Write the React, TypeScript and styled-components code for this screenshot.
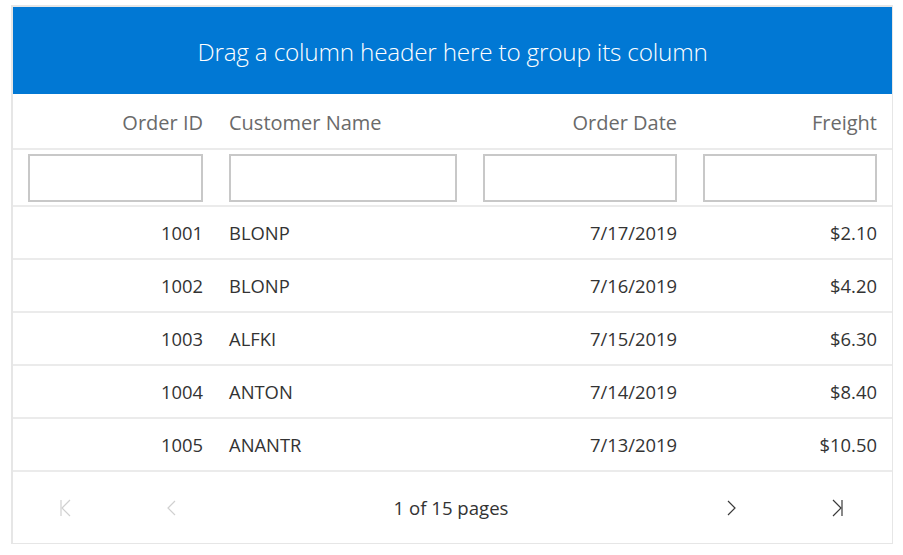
import React from "react";
import styled, { createGlobalStyle } from "styled-components";

const GlobalStyle = createGlobalStyle`
  html, body {
    margin: 0;
    padding: 0;
    background: #ffffff;
  }
  body {
    font-family: "Open Sans", "Noto Sans", "Liberation Sans", sans-serif;
  }
`

const Page = styled.div`
  padding: 5px 10px 10px 11px;
  width: 903px;
  box-sizing: border-box;
`

const Grid = styled.div`
  width: 882px;
  box-sizing: border-box;
  border-top: 2px solid #e6e6e6;
  border-left: 2px solid #e6e6e6;
  border-right: 1px solid #e6e6e6;
  border-bottom: 1px solid #e6e6e6;
  background: #fff;
`

const GroupPanel = styled.div`
  height: 87px;
  background: #0178d4;
  color: #ffffff;
  display: flex;
  align-items: center;
  justify-content: center;
  font-weight: 300;
  font-size: 24.3px;
  letter-spacing: -0.2px;
  padding-top: 2px;
  box-sizing: border-box;
`

const Row = styled.div<{ $height: number }>`
  display: grid;
  grid-template-columns: 203px 254px 220px 200px;
  height: ${p => p.$height}px;
  border-bottom: 2px solid #ebebeb;
  box-sizing: content-box;
`

const Cell = styled.div<{ $align?: "left" | "right"; $head?: boolean }>`
  display: flex;
  align-items: center;
  justify-content: ${p => (p.$align === "right" ? "flex-end" : "flex-start")};
  padding: ${p => (p.$head ? "3px" : "0")} 13px 0;
  font-size: ${p => (p.$head ? "20px" : "18.4px")};
  color: ${p => (p.$head ? "#6a6a6a" : "#333333")};
  white-space: nowrap;
  overflow: hidden;
`

const FilterCell = styled.div<{ $first?: boolean }>`
  display: flex;
  align-items: center;
  padding: 0 13px 0 ${p => (p.$first ? "15px" : "13px")};
`

const FilterInput = styled.input`
  width: 100%;
  height: 48px;
  box-sizing: border-box;
  border: 2px solid #c8c8c8;
  background: #fff;
  outline: none;
  padding: 0 8px;
  font: inherit;
`

const Pager = styled.div`
  display: grid;
  grid-template-columns: 105px 107px 1fr 107px 105px;
  align-items: center;
  height: 71px;
  padding-right: 3px;
`

const PagerButton = styled.button<{ $disabled?: boolean }>`
  background: none;
  border: none;
  padding: 0;
  display: flex;
  align-items: center;
  justify-content: center;
  color: ${p => (p.$disabled ? "#d0d0d0" : "#3a3a3a")};
  cursor: ${p => (p.$disabled ? "default" : "pointer")};
  height: 100%;
`

const PagerInfo = styled.div`
  text-align: center;
  font-size: 18.6px;
  color: #333333;
`

type Col = { title: string; align: "left" | "right" };

const columns: Col[] = [
  { title: "Order ID", align: "right" },
  { title: "Customer Name", align: "left" },
  { title: "Order Date", align: "right" },
  { title: "Freight", align: "right" },
];

const data = [
  ["1001", "BLONP", "7/17/2019", "$2.10"],
  ["1002", "BLONP", "7/16/2019", "$4.20"],
  ["1003", "ALFKI", "7/15/2019", "$6.30"],
  ["1004", "ANTON", "7/14/2019", "$8.40"],
  ["1005", "ANANTR", "7/13/2019", "$10.50"],
];

const Chevron = ({ dir, bar }: { dir: "left" | "right"; bar?: boolean }) => (
  <svg width="14" height="20" viewBox="0 0 14 20" fill="none" stroke="currentColor" strokeWidth="1.2">
    {dir === "left" ? (
      <>
        {bar && <line x1="2" y1="2" x2="2" y2="18" />}
        <polyline points={bar ? "11,2 3,10 11,18" : "10,3 3,10 10,17"} />
      </>
    ) : (
      <>
        {bar && <line x1="12" y1="2" x2="12" y2="18" />}
        <polyline points={bar ? "3,2 11,10 3,18" : "4,3 11,10 4,17"} />
      </>
    )}
  </svg>
);

const App: React.FC = () => {
  return (
    <Page>
      <GlobalStyle />
      <Grid>
        <GroupPanel>Drag a column header here to group its column</GroupPanel>
        <Row $height={54}>
          {columns.map(c => (
            <Cell key={c.title} $align={c.align} $head>
              {c.title}
            </Cell>
          ))}
        </Row>
        <Row $height={55}>
          {columns.map((c, i) => (
            <FilterCell key={c.title} $first={i === 0}>
              <FilterInput />
            </FilterCell>
          ))}
        </Row>
        {data.map(r => (
          <Row key={r[0]} $height={51}>
            {r.map((v, i) => (
              <Cell key={i} $align={columns[i].align}>
                {v}
              </Cell>
            ))}
          </Row>
        ))}
        <Pager>
          <PagerButton $disabled aria-label="First page">
            <Chevron dir="left" bar />
          </PagerButton>
          <PagerButton $disabled aria-label="Previous page">
            <Chevron dir="left" />
          </PagerButton>
          <PagerInfo>1 of 15 pages</PagerInfo>
          <PagerButton aria-label="Next page">
            <Chevron dir="right" />
          </PagerButton>
          <PagerButton aria-label="Last page">
            <Chevron dir="right" bar />
          </PagerButton>
        </Pager>
      </Grid>
    </Page>
  );
};

export default App;
